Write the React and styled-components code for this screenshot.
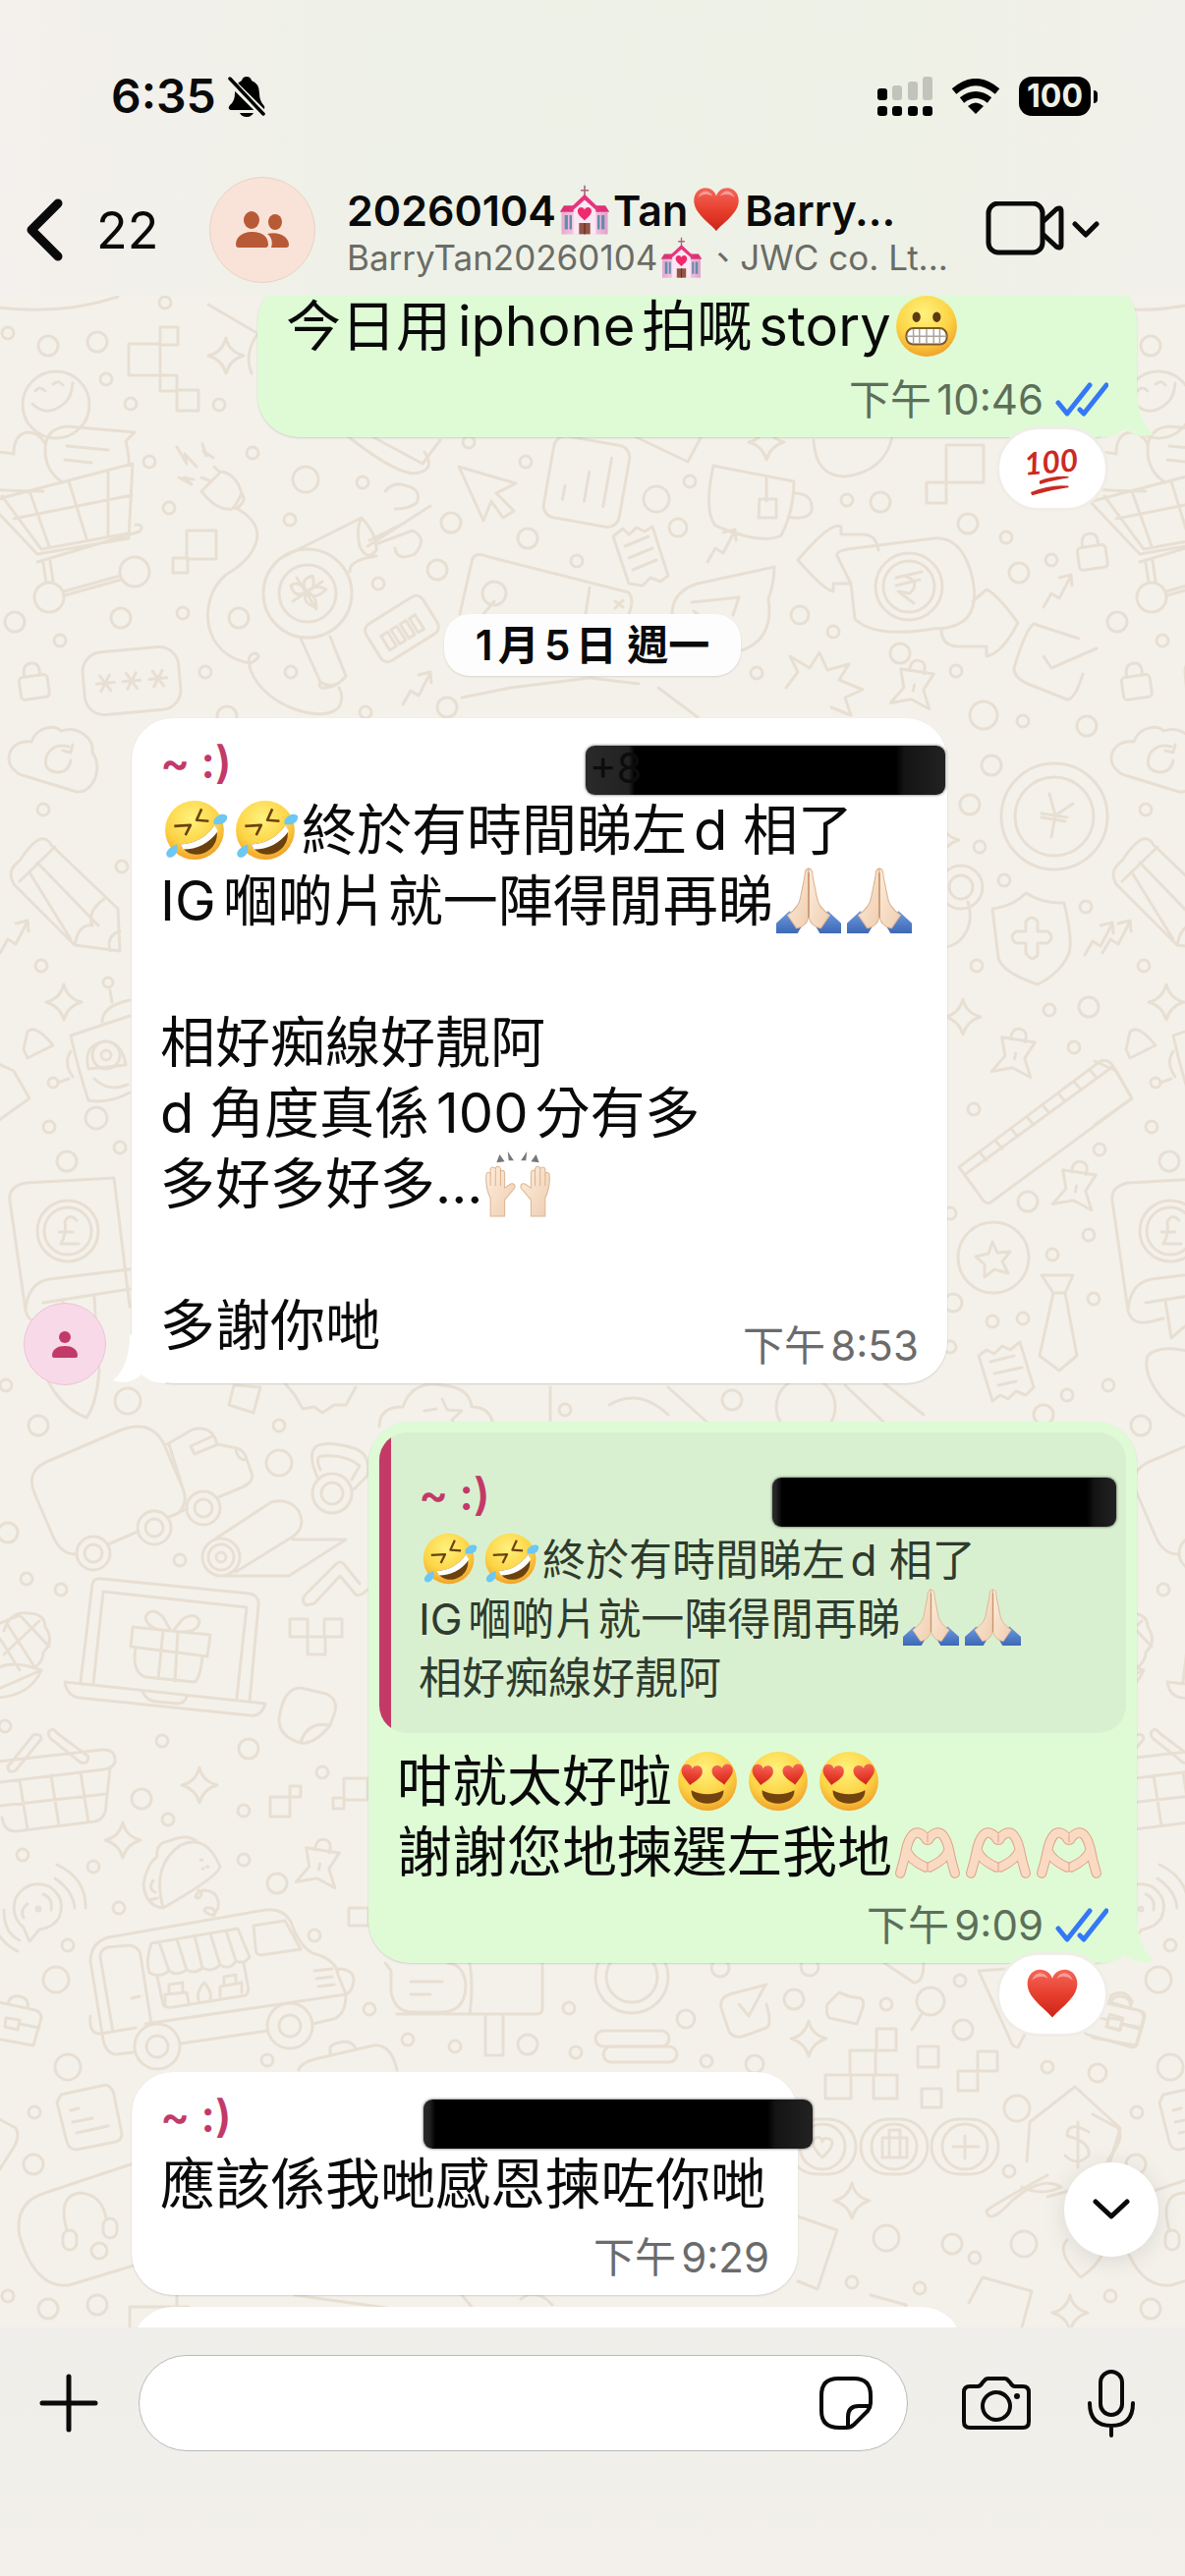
import styled, { createGlobalStyle } from "styled-components";

const GlobalStyle = createGlobalStyle`
  * {
    box-sizing: border-box;
  }
  body {
    margin: 0;
    font-family: Inter, "Noto Sans CJK TC", "Noto Sans CJK JP", sans-serif;
    color: #0a0a0a;
    text-autospace: normal;
  }
  button, input {
    font-family: inherit;
  }
`;

const Page = styled.div`
  display: flex;
  flex-direction: column;
  height: 100vh;
  background-color: #f4f1eb;
  overflow: hidden;
`;

const Header = styled.header`
  flex: none;
  padding-bottom: 13px;
  background: linear-gradient(90deg, #f4f0ed 0%, #eef1e7 35%, #eef1e6 75%, #f2f0ea 100%);
`;

const StatusBar = styled.div`
  display: flex;
  align-items: center;
  justify-content: space-between;
  padding: 70px 89px 0 113px;
  height: 126px;
`;

const Clock = styled.div`
  display: flex;
  align-items: center;
  gap: 12px;
  font-size: 48px;
  line-height: 56px;
  font-weight: 600;
`;

const StatusIcons = styled.div`
  display: flex;
  align-items: center;
  gap: 19px;
`;

const Battery = styled.div`
  display: flex;
  align-items: center;
  gap: 3px;
`;

const BatteryBody = styled.span`
  width: 73px;
  height: 40px;
  border-radius: 13px;
  background-color: black;
  color: #eef1e6;
  font-size: 32px;
  line-height: 40px;
  font-weight: 700;
  text-align: center;
`;

const BatteryTip = styled.span`
  width: 4px;
  height: 13px;
  border-radius: 0 6px 6px 0;
  background-color: black;
`;

const NavBar = styled.nav`
  display: flex;
  align-items: center;
  height: 108px;
  margin-top: 54px;
  padding: 0 87px 0 26px;
`;

const BackLink = styled.a`
  display: flex;
  align-items: center;
  gap: 34px;
  width: 187px;
  font-size: 52px;
  color: #0a0a0a;
  text-decoration: none;
`;

const Avatar = styled.span`
  display: flex;
  align-items: center;
  justify-content: center;
  flex: none;
  width: ${(props) => props.$size}px;
  height: ${(props) => props.$size}px;
  border-radius: 50%;
  background-color: ${(props) => props.$bg};
  border: 1px solid ${(props) => props.$edge};
`;

const Titles = styled.div`
  flex: 1;
  min-width: 0;
  margin: 0 22px 0 32px;
  padding-top: 4px;
  white-space: nowrap;
`;

const Title = styled.h1`
  display: flex;
  align-items: center;
  margin: 0;
  font-size: 43px;
  line-height: 52px;
  font-weight: 600;
`;

const Members = styled.p`
  display: flex;
  align-items: center;
  margin: 0;
  font-size: 35px;
  line-height: 44px;
  color: #6a6c66;
  white-space: pre;
`;

const IconButton = styled.button`
  display: flex;
  align-items: center;
  justify-content: center;
  gap: 8px;
  flex: none;
  padding: 0;
  border: none;
  background: none;
  color: #0a0a0a;
  cursor: pointer;
`;

const Chat = styled.main`
  position: relative;
  flex: 1;
  min-height: 0;
  overflow: hidden;
`;

const Wallpaper = styled.svg`
  position: absolute;
  top: 0;
  left: 0;
  width: 100%;
  height: 100%;
`;

const Messages = styled.div`
  position: relative;
  display: flex;
  flex-direction: column;
  margin-top: -16px;
`;

const Row = styled.div`
  display: flex;
  align-items: flex-end;
  justify-content: ${(props) => (props.$sent ? "flex-end" : "flex-start")};
  padding: ${(props) => (props.$sent ? "0 49px 0 0" : "0 0 0 24px")};
  margin-top: ${(props) => props.$gap || 0}px;
`;

const Bubble = styled.article`
  position: relative;
  min-width: ${(props) => props.$min || 0}px;
  margin-left: ${(props) => (props.$indent ? "110px" : "0")};
  padding: ${(props) => (props.$sent ? "11px 0 13px" : "18px 0 13px")};
  border-radius: 42px;
  background-color: ${(props) => (props.$sent ? "#defbd6" : "white")};
  box-shadow: 0 1px 2px rgba(0, 0, 0, 0.14);
`;

const TailSvg = styled.svg`
  position: absolute;
  bottom: 0;
  ${(props) => (props.$sent ? "right: -17px;" : "left: -19px; transform: scaleX(-1);")}
`;

const SideAvatar = styled.div`
  width: 110px;
  margin-bottom: -2px;
`;

const NameRow = styled.div`
  display: flex;
  align-items: flex-end;
  justify-content: space-between;
  height: 60px;
  padding-left: ${(props) => props.$inset}px;
  margin-right: ${(props) => props.$shift || 0}px;
`;

const Name = styled.strong`
  align-self: flex-start;
  font-size: 45px;
  line-height: 54px;
  font-weight: 600;
  color: #c23a68;
  white-space: pre;
`;

const Redacted = styled.span`
  display: flex;
  width: ${(props) => props.$width}px;
  height: 50px;
  padding-left: 4px;
  border-radius: 9px;
  font-size: 42px;
  line-height: 46px;
  color: #0c0c0c;
  background: linear-gradient(90deg, #2a2a2a, #222 ${(props) => props.$from}px, black ${(props) => props.$from + 6}px, black calc(100% - ${(props) => props.$to + 8}px), #141414 calc(100% - ${(props) => props.$to}px), #222);
  box-shadow: 0 0 3px rgba(0, 0, 0, 0.7);
`;

const Text = styled.p`
  margin: 0;
  padding: 0 33px 0 29px;
  font-size: 56px;
  line-height: 72px;
  white-space: pre;
`;

const Meta = styled.div`
  display: flex;
  align-items: center;
  justify-content: flex-end;
  gap: 12px;
  margin-top: ${(props) => (props.$tuck ? "-40px" : "14px")};
  padding-right: 29px;
  font-size: 42px;
  line-height: 50px;
  color: ${(props) => (props.$sent ? "#5d6f59" : "#6b6b6b")};
`;

const Quote = styled.blockquote`
  margin: 0 11px 13px;
  padding: 36px 0 26px 12px;
  border-radius: 28px;
  background: linear-gradient(90deg, #c43a66 12px, #d9f0d0 12px);
`;

const QuoteText = styled.p`
  margin: 4px 0 0;
  padding: 0 28px;
  font-size: 44px;
  line-height: 60px;
  color: #2f3b2e;
  white-space: pre;
`;

const Reaction = styled.button`
  position: absolute;
  right: 29px;
  bottom: -75px;
  display: flex;
  align-items: center;
  justify-content: center;
  width: 114px;
  height: 86px;
  padding: 0;
  border: 3px solid #f0ede7;
  border-radius: 43px;
  background-color: white;
  cursor: pointer;
`;

const DateChip = styled.time`
  align-self: center;
  margin: 180px 0 0;
  padding: 0 32px;
  border-radius: 26px;
  background-color: #fefdfd;
  box-shadow: 0 1px 2px rgba(0, 0, 0, 0.12);
  font-size: 42px;
  line-height: 63px;
  font-weight: 600;
  white-space: pre;
`;

const ScrollDown = styled(IconButton)`
  position: absolute;
  right: 27px;
  bottom: 72px;
  width: 96px;
  height: 96px;
  border-radius: 50%;
  background-color: white;
  box-shadow: 0 4px 24px rgba(0, 0, 0, 0.1);
`;

const Composer = styled.footer`
  flex: none;
  display: flex;
  align-items: flex-start;
  height: 253px;
  padding: 28px 50px 0 40px;
  background: linear-gradient(180deg, #efeeea 0%, #f3f0eb 100%);
`;

const ComposerButton = styled(IconButton)`
  height: 98px;
  margin-left: ${(props) => props.$space || 0}px;
`;

const Field = styled.div`
  flex: 1;
  min-width: 0;
  display: flex;
  align-items: center;
  height: 98px;
  margin-left: 41px;
  padding: 0 34px 0 40px;
  border: 1px solid #b9b9b9;
  border-radius: 49px;
  background-color: white;
`;

const Input = styled.input`
  flex: 1;
  min-width: 0;
  border: none;
  outline: none;
  background: none;
  font-size: 52px;
`;

const EmojiSvg = styled.svg`
  display: inline-block;
  flex: none;
  width: ${(props) => props.$size}px;
  height: ${(props) => props.$size}px;
  margin: 0 3px;
  overflow: visible;
  vertical-align: ${(props) => (props.$size > 60 ? "-13px" : "-11px")};
`;

const HiddenDefs = styled.svg`
  position: absolute;
  width: 0;
  height: 0;
`;

const Defs = () => (
  <HiddenDefs aria-hidden="true">
    <defs>
      <radialGradient id="face" cx="45%" cy="30%" r="75%">
        <stop offset="0" stopColor="#fff27c" />
        <stop offset="0.6" stopColor="#fdd345" />
        <stop offset="1" stopColor="#ee9a25" />
      </radialGradient>
      <linearGradient id="red" x1="0" y1="0" x2="0" y2="1">
        <stop offset="0" stopColor="#f4665a" />
        <stop offset="0.5" stopColor="#e8402f" />
        <stop offset="1" stopColor="#cd2318" />
      </linearGradient>
      <linearGradient id="skin" x1="0" y1="0" x2="1" y2="1">
        <stop offset="0" stopColor="#fdeedd" />
        <stop offset="1" stopColor="#efcdb0" />
      </linearGradient>
      <linearGradient id="sleeve" x1="0" y1="0" x2="0" y2="1">
        <stop offset="0" stopColor="#6d9be0" />
        <stop offset="1" stopColor="#3d68b5" />
      </linearGradient>
      <linearGradient id="wall" x1="0" y1="0" x2="1" y2="0">
        <stop offset="0" stopColor="#e7a8cf" />
        <stop offset="0.5" stopColor="#fae3f2" />
        <stop offset="1" stopColor="#e2a0ca" />
      </linearGradient>
    </defs>
  </HiddenDefs>
);

const HEART = "M32 58C24 48 4 36 4 20C4 10 11 4 18 4C25 4 30 8 32 14C34 8 39 4 46 4C53 4 60 10 60 20C60 36 40 48 32 58Z";
const HAND_LEFT = "M5 53Q9 40 11 29Q15 13 22 13Q28 14 31 20M12 32Q15 40 30 47";
const HAND_RIGHT = "M59 53Q55 40 53 29Q49 13 42 13Q36 14 33 20M52 32Q49 40 34 47";

const drawings = {
  grin: (
    <>
      <circle cx="32" cy="32" r="30" fill="url(#face)" />
      <ellipse cx="22" cy="23" rx="4" ry="5" fill="#5b3a12" />
      <ellipse cx="42" cy="23" rx="4" ry="5" fill="#5b3a12" />
      <rect x="12" y="34" width="40" height="16" rx="7" fill="#fff" stroke="#7d5a2a" strokeWidth="2" />
      <path d="M12 42H52M19 35V49M25 35V49M32 35V49M39 35V49M45 35V49" stroke="#a9a39a" strokeWidth="1.4" />
    </>
  ),
  rofl: (
    <>
      <circle cx="31" cy="32" r="29" fill="url(#face)" />
      <path d="M11 28L27 27L22 37" fill="none" stroke="#6b420f" strokeWidth="2.5" strokeLinejoin="round" />
      <path d="M38 11L33 22L45 23" fill="none" stroke="#6b420f" strokeWidth="2.5" strokeLinejoin="round" />
      <path d="M17 46C30 46 43 39 51 27C57 39 50 52 39 55C30 58 21 54 17 46Z" fill="#6b420f" />
      <path d="M17 46C30 46 43 39 51 27L54 33C46 45 33 51 20 51Z" fill="#fff" />
      <path d="M50 22C54 16 60 15 63 18C64 24 58 28 50 26Z" fill="#6cc7f4" />
      <path d="M14 46C15 53 12 59 6 59C1 57 2 50 14 46Z" fill="#6cc7f4" />
    </>
  ),
  love: (
    <>
      <circle cx="32" cy="32" r="29" fill="url(#face)" />
      <path transform="translate(6 13) rotate(8) scale(0.37)" d={HEART} fill="url(#red)" />
      <path transform="translate(34 16) rotate(-8) scale(0.37)" d={HEART} fill="url(#red)" />
      <path d="M16 41C26 46 38 46 48 41C48 50 41 54 32 54C23 54 16 50 16 41Z" fill="#71430f" />
    </>
  ),
  pray: (
    <>
      <path d="M0 54L13 42L27 54L21 64H0Z" fill="url(#sleeve)" />
      <path d="M64 54L51 42L37 54L43 64H64Z" fill="url(#sleeve)" />
      <path d="M32 0C29 0 28 3 28 8L24 28C23 36 17 42 11 46L20 59C27 58 31 53 32 47Z" fill="url(#skin)" stroke="#dcb08d" strokeWidth="1" />
      <path d="M32 0C35 0 36 3 36 8L40 28C41 36 47 42 53 46L44 59C37 58 33 53 32 47Z" fill="url(#skin)" stroke="#dcb08d" strokeWidth="1" />
      <path d="M32 4V48" stroke="#c9946c" strokeWidth="1.5" />
    </>
  ),
  raise: (
    <>
      <g fill="url(#skin)" stroke="#dcb594" strokeWidth="1">
        <path d="M5 64V46C1 38 0 30 1 22Q3 19 5 22V17Q7 14 10 17V16Q13 13 15 17V20Q18 17 19 21V36L25 32Q30 31 29 36L19 48V64Z" />
        <path d="M59 64V46C63 38 64 30 63 22Q61 19 59 22V17Q57 14 54 17V16Q51 13 49 17V20Q46 17 45 21V36L39 32Q34 31 35 36L45 48V64Z" />
        <path d="M5 22V34M10 18V34M15 18V34M59 22V34M54 18V34M49 18V34" />
      </g>
      <path d="M11 11L14 3L19 10ZM23 9L22 0L28 9ZM35 9L41 0L40 9ZM45 10L50 3L53 11Z" fill="#777" />
    </>
  ),
  hands: (
    <g fill="none" strokeLinecap="round" strokeLinejoin="round">
      <path d={HAND_LEFT} stroke="#e0a488" strokeWidth="10" />
      <path d={HAND_RIGHT} stroke="#e0a488" strokeWidth="10" />
      <path d={HAND_LEFT} stroke="#fbdac4" strokeWidth="8" />
      <path d={HAND_RIGHT} stroke="#fbdac4" strokeWidth="8" />
      <path d="M32 15V22M32 43V50" stroke="#e0a488" strokeWidth="1" />
    </g>
  ),
  heart: (
    <>
      <path d={HEART} fill="url(#red)" />
      <path d="M9 16Q12 8 19 8Q25 9 27 14Q18 9 9 16ZM37 14Q39 9 45 8Q52 8 55 16Q46 9 37 14Z" fill="#fff" opacity="0.4" />
    </>
  ),
  hundred: (
    <>
      <text x="31" y="37" textAnchor="middle" fontFamily="Lato, sans-serif" fontStyle="italic" fontWeight="700" fontSize="36" fill="#cb2a22" transform="rotate(-5 32 30)">100</text>
      <path d="M18 47Q32 41 50 42Q36 44 18 49ZM8 60Q30 51 50 53Q34 55 9 62Z" fill="#cb2a22" stroke="#cb2a22" strokeWidth="2" strokeLinejoin="round" />
    </>
  ),
  church: (
    <>
      <path d="M32 1V16M27 7H37" stroke="#a9677c" strokeWidth="2" />
      <path d="M3 34H61V62H3Z" fill="url(#wall)" />
      <path d="M18 28L32 15L46 28V62H18Z" fill="#fbe6f3" />
      <path d="M1 34L6 26H18V34ZM63 34L58 26H46V34Z" fill="#dc3275" />
      <path d="M32 12L12 31L15 34L32 19L49 34L52 31Z" fill="#e6357c" />
      <path transform="translate(22 27) scale(0.31)" d={HEART} fill="#f0286c" />
      <path d="M25 48H39V62H25Z" fill="#935345" />
      <path d="M32 48V62" stroke="#5f2e26" strokeWidth="1.5" />
      <path d="M7 38H11V56H7ZM13 38H16V56H13ZM48 38H51V56H48ZM53 38H57V56H53Z" fill="#658cab" />
    </>
  ),
};

const Emoji = ({ kind, label, size = 66 }) => (
  <EmojiSvg $size={size} viewBox="0 0 64 64" role="img" aria-label={label}>
    {drawings[kind]}
  </EmojiSvg>
);

const Tail = ({ sent }) => (
  <TailSvg $sent={sent} width="60" height="50" viewBox="0 0 60 50" aria-hidden="true">
    <path d="M43 0C43 22 49 38 60 47C49 51 38 48 31 41C24 48 14 50 6 50L16 16Z" fill={sent ? "#defbd6" : "white"} />
  </TailSvg>
);

const Ticks = () => (
  <svg width="54" height="36" viewBox="0 0 54 36" role="img" aria-label="已讀">
    <path d="M3 21L12 32L35 3M25 28L29 32L52 3" fill="none" stroke="#3478f6" strokeWidth="5" strokeLinecap="round" strokeLinejoin="round" />
  </svg>
);

// x, y, radius
const dots = [
  [8, 339, 6], [49, 352, 10], [99, 348, 10], [168, 308, 6], [108, 386, 6], [133, 411, 6], [223, 412, 6],
  [152, 470, 6], [257, 461, 6], [311, 488, 13], [172, 517, 6], [369, 491, 6], [295, 529, 6], [459, 532, 10],
  [15, 633, 10], [61, 652, 6], [123, 629, 10], [186, 624, 6], [243, 629, 10], [385, 594, 6], [445, 580, 10],
  [209, 684, 6], [296, 684, 6], [455, 720, 10], [372, 725, 6], [231, 729, 10], [44, 824, 6], [124, 882, 6],
  [42, 983, 6], [110, 1000, 5], [50, 1147, 6], [122, 1168, 6], [68, 1182, 10], [477, 450, 6], [535, 470, 6],
  [668, 508, 13], [537, 548, 10], [690, 537, 9], [702, 490, 6], [862, 509, 6], [896, 511, 10], [587, 571, 6],
  [985, 533, 10], [1024, 547, 6], [1070, 570, 6], [1037, 583, 10], [814, 626, 9], [848, 643, 6], [916, 665, 10],
  [973, 683, 6], [770, 685, 6], [1009, 779, 10], [1041, 734, 6], [1106, 739, 10], [1001, 728, 14], [987, 819, 10],
  [997, 862, 6], [1022, 896, 6], [1105, 923, 6], [994, 983, 6], [1068, 1028, 6], [1108, 1025, 10], [1093, 1066, 6],
  [991, 1129, 6], [1119, 1170, 6], [1046, 1223, 10], [967, 1235, 6], [1108, 1257, 6], [1071, 1277, 6],
  [970, 1326, 9], [1010, 1345, 6], [1041, 1342, 6], [1113, 1322, 6], [1086, 1420, 6], [967, 1371, 6],
  [6, 1410, 6], [39, 1451, 10], [130, 1426, 13], [284, 1451, 6], [284, 1489, 13], [8, 1560, 10], [27, 1607, 6],
  [62, 1618, 6], [183, 1588, 6], [5, 1757, 6], [165, 1772, 6], [253, 1780, 10], [328, 1804, 6], [144, 1831, 10],
  [248, 1843, 6], [171, 1852, 6], [23, 1888, 6], [95, 1900, 6], [248, 1893, 6], [282, 1917, 10], [121, 1942, 6],
  [69, 1980, 6], [57, 2015, 13], [320, 1970, 6], [69, 2104, 13], [272, 2097, 6], [376, 2045, 6], [415, 2076, 6],
  [463, 2083, 6], [537, 2081, 10], [579, 2044, 6], [586, 2089, 6], [35, 2150, 6], [34, 2203, 10], [8, 2337, 6],
  [49, 2350, 10], [99, 2346, 10], [733, 2003, 9], [824, 2002, 9], [698, 2055, 9], [808, 2035, 10], [902, 2040, 6],
  [980, 2066, 10], [977, 2016, 6], [719, 2098, 6], [768, 2101, 9], [1066, 2104, 6], [1117, 2110, 9],
  [1035, 2146, 13], [1027, 2210, 6], [902, 2278, 13], [969, 2284, 10], [992, 2298, 6], [1042, 2284, 13],
  [867, 2323, 6], [936, 2329, 6], [575, 1435, 6], [745, 1425, 10], [1062, 1440, 10], [820, 1432, 30],
];

// x, y, width, height
const squares = [
  [131, 350, 32, 32], [163, 333, 18, 18], [163, 382, 17, 16], [180, 397, 22, 21], [190, 540, 30, 29],
  [176, 568, 15, 15], [963, 453, 38, 38], [943, 491, 20, 21], [295, 1648, 18, 18], [313, 1666, 18, 18],
  [330, 1648, 18, 18], [275, 1829, 20, 20], [295, 1818, 11, 11], [350, 1810, 24, 22], [339, 1830, 11, 11],
  [355, 1942, 20, 18], [892, 2065, 20, 22], [865, 2087, 26, 25], [840, 2112, 26, 24], [889, 2112, 24, 24],
  [934, 2083, 21, 21], [975, 2108, 20, 20], [995, 2088, 20, 20], [938, 2126, 20, 19], [132, 2348, 60, 30],
];

const sparkles = [
  [230, 362], [65, 1020], [780, 450], [980, 1035], [958, 855], [203, 1817], [125, 1873], [823, 2075],
  [867, 2240], [1089, 2354],
];

const pins = [[930, 700], [1095, 1210], [1033, 1075], [325, 1900]];
const locks = [[1111, 565], [34, 697]];
const arrows = [[410, 717], [720, 572], [1062, 618], [0, 970], [1104, 972]];

const Doodles = () => (
  <g id="doodles">
    {dots.map(([x, y, r]) => (
      <circle key={`${x}-${y}`} cx={x} cy={y} r={r} />
    ))}
    {squares.map(([x, y, w, h]) => (
      <rect key={`${x}-${y}`} x={x} y={y} width={w} height={h} />
    ))}
    {sparkles.map(([x, y]) => (
      <path key={`${x}-${y}`} transform={`translate(${x} ${y})`} d="M0-18Q3-4 18 0Q4 4 0 18Q-4 4-18 0Q-4-3 0-18Z" />
    ))}
    {pins.map(([x, y]) => (
      <path key={`${x}-${y}`} transform={`translate(${x} ${y}) rotate(12)`} d="M-8-16Q-9-28 0-28Q8-28 7-16M-17-16L17-18L10 0L20 18L0 12L-20 20L-10 2ZM0-3V3" />
    ))}
    {locks.map(([x, y]) => (
      <g key={`${x}-${y}`} transform={`translate(${x} ${y}) rotate(-8)`}>
        <rect x="-14" y="-9" width="29" height="23" rx="4" />
        <path d="M-8-9V-14Q-7-22 0-22Q8-22 8-14V-9" />
      </g>
    ))}
    {arrows.map(([x, y]) => (
      <path key={`${x}-${y}`} transform={`translate(${x} ${y})`} d="M0 0L8-14L16-9L28-32M16-30L28-33L29-22" />
    ))}

    {/* cart and smiley */}
    <circle cx="57" cy="412" r="34" />
    <path d="M36 398Q40 392 46 398M54 391Q60 386 64 392M33 411Q48 426 66 410Q73 404 74 390" />
    <path d="M-10 460Q5 460 14 462Q14 442 28 440Q40 440 46 452M137 440L128 449Q132 466 131 472M137 440L68 434Q46 436 46 458Q46 480 64 491M68 454L110 458M66 468L93 471M-10 498Q18 500 44 500" />
    <path d="M-15 508L38 564L131 548L135 472L-10 510M2 505L42 559L130 543M30 500L50 556M70 490L88 548M110 480V546M14 528L134 504M38 572L142 541Q148 534 138 534M44 573L47 593M51 571L54 591M65 602L122 586M66 606L123 590" />
    <circle cx="50" cy="608" r="15" />
    <circle cx="137" cy="582" r="15" />

    {/* plug and its cord */}
    <path d="M180 455L190 472L188 462L200 475M206 452L210 464L207 459L217 466M182 486L195 493L187 486L197 488M205 500L225 480Q240 482 246 502Q240 515 236 518Q220 520 205 500ZM205 486L215 490M218 475L224 481M246 502Q252 510 240 518M242 518C280 540 256 570 230 585C200 610 205 668 255 675Q268 668 260 665Q250 665 255 682C270 722 335 738 346 718Q350 708 345 700" />

    {/* hair dryer */}
    <circle cx="313" cy="604" r="45" />
    <circle cx="313" cy="604" r="29" />
    <path d="M296 596Q304 590 312 602Q300 610 296 596M318 586Q304 590 312 602Q322 600 318 586M332 600Q322 594 312 602Q320 612 332 600M322 618Q322 606 312 602Q306 614 322 618M298 612L328 592M302 588L322 620" />
    <path d="M286 568L368 527M368 527Q384 544 383 560Q374 572 366 556Q362 538 368 527M383 566Q355 570 356 582M306 650L326 694Q340 704 352 688L336 648M326 694Q322 704 340 698M374 556L438 515M376 550L412 532M392 500Q400 490 412 494Q430 498 424 512Q416 518 402 518M402 558Q404 572 422 564Q436 548 420 540L385 553" />

    {/* barcode, password, cloud */}
    <g transform="translate(409 640) rotate(-32)">
      <rect x="-34" y="-22" width="68" height="44" rx="8" />
      <path d="M-22-5H-14V12H-22ZM-10-5H-3V12H-10ZM1-5H8V12H1ZM12-5H19V12H12Z" />
    </g>
    <g transform="translate(134 693) rotate(-5)">
      <rect x="-49" y="-32" width="98" height="64" rx="20" />
      {[-27, 0, 27].map((x) => (
        <path key={x} d={`M${x - 9} 0H${x + 9}M${x - 5}-8L${x + 5} 8M${x + 5}-8L${x - 5} 8`} />
      ))}
    </g>
    <path d="M16 785C2 775 10 752 32 755C38 738 58 738 62 744C80 738 96 752 94 766C106 782 94 808 78 806L26 790Q18 788 16 785ZM70 760Q55 756 48 768Q42 784 58 786Q70 786 72 774M74 758L72 766L64 764" />

    {/* pencil and robot */}
    <path d="M12 895Q8 885 20 876Q42 842 52 860L120 925L122 968L76 962L14 900ZM20 897L56 862M38 878L100 942M30 888L72 956M106 915Q88 928 94 942Q80 940 76 962M112 968Q108 952 122 948" />
    <path d="M24 1068L28 1050Q36 1042 54 1064L28 1077ZM72 1054L132 1034M72 1054Q80 1090 90 1120Q110 1124 132 1112M72 1070Q64 1082 74 1096M59 1102L70 1098M104 1040Q104 1024 132 1018M114 1020L112 1008M90 1088Q84 1064 106 1060Q124 1060 128 1084ZM96 1098Q110 1112 130 1104M-8 1080L14 1090L30 1118L-8 1145" />
    <circle cx="108" cy="1074" r="14" />
    <circle cx="108" cy="1074" r="5" />
    <circle cx="54" cy="1102" r="5" />
    <circle cx="98" cy="1138" r="11" />

    {/* coin book */}
    <path d="M26 1334L10 1222Q8 1208 26 1204L116 1199L132 1330M26 1334Q28 1306 50 1302L132 1292M26 1334Q30 1350 50 1345L62 1342M44 1326L132 1312M64 1324L70 1362L84 1350L98 1358L96 1320" />
    <circle cx="69" cy="1253" r="31" />
    <circle cx="69" cy="1253" r="24" />
    <path d="M78 1242Q70 1234 66 1244Q68 1256 62 1266H80M60 1254H74" />
    <path d="M46 1380C40 1400 60 1432 88 1443Q98 1430 101 1395Q100 1376 80 1374Q56 1370 46 1380Z" />

    {/* upper middle */}
    <path d="M467 475L525 492L505 502L523 520L512 527L500 510L492 530ZM637 440L700 470L716 440M355 445Q400 480 420 482Q445 480 432 460M380 445L430 472L448 448" />
    <g transform="translate(596 490) rotate(10)">
      <rect x="-38" y="-42" width="78" height="84" rx="12" />
      <path d="M-20 8V22M2-10V20M22-28V22" />
    </g>
    <path d="M726 474L808 490Q808 520 795 545Q775 555 728 535Q716 520 726 474ZM780 486V510M773 508H790V527H772ZM808 502Q828 502 826 520Q822 530 802 526M828 448Q830 485 860 485Q900 480 908 445" />
    <path d="M624 546L634 538L640 544L648 537L656 541L664 536L680 586L672 592L662 588L654 596L640 594ZM636 556L660 546M640 568L664 558M644 580L668 570" />
    <path d="M468 625L480 572Q482 560 498 567L640 603Q646 612 640 625M600 598L596 625M626 612L634 618M634 611L626 619M492 625L503 612" />
    <circle cx="503" cy="604" r="12" />
    <path d="M684 625Q684 602 710 594L788 577Q788 592 782 610Q788 650 755 662M704 613L752 608L746 626M706 622L714 628" />
    <path d="M894 560Q892 544 878 544H856V536Q846 530 812 570Q838 600 848 602V594H866L852 566Q850 560 870 558L950 548Q980 545 990 590Q1000 640 950 640Q890 650 870 630L866 594M990 612L1004 600Q1014 604 1036 634Q1020 665 1004 668V658H976Q958 658 958 640" />
    <circle cx="925" cy="597" r="34" />
    <circle cx="925" cy="597" r="26" />
    <path d="M912 588L938 582M912 596L936 590M920 586Q938 592 926 604L914 602L930 614" />
    <path d="M1098 650L1052 635Q1044 640 1032 680Q1032 690 1046 696L1086 712Q1094 712 1102 686M1062 668L1070 680L1116 660" />
    <path d="M800 700L812 684L804 668L824 680L834 664L842 682L864 676L854 692L878 702L860 710L866 728L846 720M470 710L520 700L600 690L650 696M670 700L710 730" />
    <path d="M262 340Q248 360 256 380M212 310L260 338M-10 312Q60 322 120 302" />

    {/* right column */}
    <circle cx="1073" cy="831" r="54" />
    <circle cx="1073" cy="831" r="40" />
    <path d="M1068 808L1074 830L1092 818M1060 832L1084 836M1060 828L1086 832M1074 830L1070 852" />
    <circle cx="978" cy="903" r="22" />
    <circle cx="978" cy="903" r="12" />
    <path d="M985 918Q992 940 978 956Q970 964 960 964" />
    <path d="M1010 925Q1032 922 1044 909Q1062 920 1083 919Q1092 958 1088 970Q1080 990 1056 1002Q1020 990 1016 975ZM1044 938Q1050 930 1056 938V948H1066Q1074 954 1066 960H1056V972Q1050 980 1044 970V960H1034Q1026 954 1034 948H1044Z" />
    <path d="M976 1188L1120 1080Q1128 1078 1132 1084L1152 1118L1008 1224Q1002 1226 998 1218ZM984 1194L1132 1086M998 1174L1004 1181M1014 1162L1020 1169M1030 1150L1036 1157M1046 1138L1052 1145M1062 1126L1068 1133M1078 1114L1084 1121M1094 1102L1100 1109M1110 1090L1116 1097" />
    <circle cx="1011" cy="1280" r="36" />
    <path d="M1010 1264L1015 1275L1028 1274L1020 1284L1026 1296L1012 1292L1002 1300L1002 1287L993 1279L1006 1276Z" />
    <path d="M1060 1298H1092L1084 1316H1072ZM1072 1316L1058 1380L1078 1395L1096 1380L1084 1316" />
    <path d="M996 1380L1004 1374L1012 1378L1020 1370L1028 1374L1038 1366L1052 1412L1044 1420L1034 1416L1026 1424L1018 1420L1010 1426ZM1008 1386L1032 1380M1012 1398L1040 1392M1016 1410L1034 1406" />

    {/* van, roll, kettlebell */}
    <path d="M77 1582Q62 1582 54 1564L36 1522Q24 1496 52 1486L122 1456Q152 1444 166 1468L186 1515Q192 1528 182 1540L172 1544M170 1470L196 1455Q216 1450 221 1470M172 1470L186 1515M221 1470L236 1473Q248 1474 251 1485L257 1502Q256 1510 246 1514L222 1524M194 1472L216 1462M194 1472L198 1480L222 1470M240 1476Q242 1486 250 1486M110 1572L140 1559M172 1544L190 1536" />
    {[[95, 1581], [157, 1555], [207, 1535]].map(([x, y]) => (
      <g key={x}>
        <circle cx={x} cy={y} r="17" />
        <circle cx={x} cy={y} r="9" />
      </g>
    ))}
    <circle cx="225" cy="1585" r="19" />
    <circle cx="225" cy="1585" r="13" />
    <circle cx="225" cy="1585" r="5" />
    <path d="M218 1567L276 1529Q294 1524 304 1538Q312 1554 298 1564L240 1600M298 1567H352L294 1604H230" />
    <circle cx="338" cy="1520" r="20" />
    <circle cx="338" cy="1520" r="11" />
    <path d="M324 1506Q312 1480 322 1472Q334 1466 360 1474Q378 1480 374 1502L360 1516M326 1496Q320 1482 328 1482Q352 1480 366 1492L358 1506" />
    <path d="M386 1452Q386 1432 410 1432Q420 1404 450 1410Q478 1412 480 1432Q500 1432 502 1452M450 1424L455 1435L470 1436L460 1445L464 1452M432 1436L444 1434M290 1408L300 1420L308 1434L320 1432L328 1438L340 1430L352 1430L362 1412M238 1410L233 1430L258 1438L265 1412Z" />
    <path d="M560 1412V1448M680 1412L720 1448M900 1408L940 1440M860 1410L900 1448M620 1430Q650 1412 680 1440" />

    {/* laptop with gift */}
    <path d="M82 1712L94 1612Q96 1606 104 1607L254 1622Q264 1624 263 1634L254 1732M95 1714L105 1620L251 1636L241 1728M66 1712L270 1734Q266 1748 254 1746L80 1728Q68 1726 66 1712ZM145 1722Q150 1732 160 1732L180 1734Q188 1734 190 1727" />
    <path d="M135 1656L214 1664L211 1686L133 1676ZM166 1660L161 1709M181 1661L178 1711M138 1678Q134 1702 148 1707L198 1712Q204 1708 206 1686M174 1660Q150 1660 148 1646Q154 1634 166 1646ZM176 1660Q202 1664 203 1650Q198 1640 186 1648Z" />
    <path d="M310 1624Q306 1630 312 1634L320 1632L346 1604L362 1623Q366 1626 374 1618M310 1624L342 1592Q346 1588 350 1592L366 1612" />
    <path d="M284 1750Q288 1718 306 1718L332 1724Q344 1730 341 1742L336 1756Q320 1776 306 1774Q284 1768 284 1750ZM306 1774Q312 1752 336 1756" />
    <path d="M0 1652L20 1644M4 1660Q10 1640 28 1642Q46 1642 46 1656Q56 1670 44 1682Q44 1692 34 1698M8 1654L36 1698M4 1684L40 1650M0 1668L20 1700M22 1646L50 1676M-6 1700Q10 1688 42 1700Q30 1728 -8 1728M42 1700L-8 1722" />

    {/* basket, waves, taco */}
    <path d="M-10 1794L104 1781Q118 1780 117 1794Q114 1800 106 1801L-8 1815M2 1850Q4 1864 16 1864L96 1854Q108 1852 108 1836L112 1800M20 1812L28 1862M52 1807L60 1858M82 1804L90 1855M0 1838L108 1826M8 1798L34 1766Q42 1764 42 1770L16 1802Q8 1806 8 1798M50 1762Q54 1758 58 1764L90 1788Q90 1796 82 1794L52 1770Q48 1766 50 1762" />
    <path d="M30 1976L24 1962Q10 1950 16 1932Q28 1912 50 1920Q68 1932 60 1952Q54 1962 40 1964ZM24 1952Q20 1944 28 1938M44 1928Q54 1932 52 1944M56 1912Q74 1924 76 1942M58 1898Q88 1912 87 1942M4 1944Q4 1968 20 1975M-6 1962Q4 1980 18 1986" />
    <circle cx="39" cy="1943" r="2" />
    <path d="M166 1942Q154 1898 184 1878Q210 1866 224 1900Q222 1910 166 1942ZM166 1942Q148 1940 146 1918Q150 1896 160 1890Q158 1876 172 1874Q190 1866 200 1874M156 1914Q150 1922 158 1926M160 1932L152 1934M204 1893H206M210 1900H212M206 1902H207" />
    <path d="M218 1950Q204 1946 210 1942Q220 1940 218 1950M202 1926Q196 1932 202 1932Q208 1926 202 1924M206 1924Q224 1924 222 1942Q220 1946 216 1950" />

    {/* food truck */}
    <path d="M104 2070L92 1996Q92 1978 110 1972L270 1944Q288 1942 296 1956Q304 1980 318 1988Q342 1994 344 2010L352 2030L148 2060M104 2070Q106 2090 118 2091L136 2089M184 2080L272 2067M318 2060L340 2055Q352 2050 352 2030M344 2004Q360 2004 360 2016Q358 2030 350 2030M92 2052Q90 2070 102 2070L138 2064M115 2068L102 1992Q102 1984 110 1982L132 1980Q142 1982 143 1990L154 2060M134 2034L142 2032M258 1960L290 1955L306 1984L266 1990Q260 1990 260 1982ZM320 2006L338 2004M322 2014L338 2012M324 2022L340 2020" />
    <path d="M154 1978L242 1963L254 1992Q248 2000 240 1996Q234 2006 224 2000Q216 2008 206 2003Q198 2010 190 2005Q180 2012 172 2006Q162 2014 152 2008Q148 1996 154 1978ZM162 1977L172 2006M180 1974L190 2005M198 1970L206 2003M214 1968L224 2000M230 1965L240 1996M160 2012L166 2040Q168 2044 176 2043L250 2031Q254 2028 252 2020L248 1998M168 2040V2030L190 2028L192 2038M172 2028V2020L186 2018V2028M202 2036Q200 2026 208 2018Q216 2028 214 2034M224 2032V2022L246 2018V2028M228 2020V2012L240 2010V2018" />
    <circle cx="160" cy="2083" r="23" />
    <circle cx="160" cy="2083" r="11" />
    <circle cx="295" cy="2062" r="23" />
    <circle cx="295" cy="2062" r="11" />
    <path d="M-10 2036L36 2046Q42 2048 42 2054L34 2082L-10 2074M8 2040Q10 2030 20 2032Q30 2034 28 2044M6 2054L20 2056L18 2066L5 2063ZM20 2060L40 2064" />
    <path d="M62 2132L108 2122Q114 2124 116 2132L124 2172Q124 2178 118 2180L78 2188Q70 2188 68 2180L58 2140ZM72 2148L80 2146M74 2160L94 2156M78 2171L110 2164M-10 2152L16 2166Q22 2176 10 2192L-8 2220" />
    <path d="M136 2202L46 2232Q14 2242 20 2276Q36 2330 70 2326L136 2306M68 2270Q58 2234 82 2232Q104 2234 108 2258" />
    <rect x="64" y="2270" width="14" height="20" rx="7" />
    <rect x="105" y="2258" width="14" height="20" rx="7" />
    <circle cx="101" cy="2291" r="8" />

    {/* mailbox row */}
    <path d="M392 1998L398 2006V2028Q402 2048 420 2048H452Q474 2046 474 2020Q472 2000 456 1998M478 1998Q482 2020 478 2050M404 2050H546Q552 2050 552 2044V1998M418 2017H450M418 2030H438M494 2050V2092H512V2050" />
    <circle cx="643" cy="2012" r="37" />
    <circle cx="643" cy="2012" r="26" />
    <rect x="606" y="2067" width="75" height="16" rx="8" />
    <rect x="614" y="2083" width="75" height="16" rx="8" />
    <path d="M304 2107Q306 2100 320 2096L380 2082Q398 2080 404 2107M336 2092V2084Q338 2080 350 2078Q360 2078 362 2086" />
    <path d="M780 2020L742 2030Q732 2034 734 2044L742 2068Q748 2076 758 2072L780 2064Q786 2060 780 2040M752 2040L762 2052L778 2022M848 2034L854 2028L864 2032L876 2034Q880 2036 878 2044L872 2060L844 2054Q840 2050 842 2040Z" />
    <circle cx="947" cy="2037" r="14" />
    <path d="M938 2050L928 2066M996 2006L1080 2000L1036 2084Q1030 2084 1028 2076ZM900 1998L930 2018Q940 2018 940 1998" />
    <g transform="translate(1134 2060) rotate(16)">
      <rect x="-28" y="-20" width="56" height="38" rx="5" />
      <path d="M-11-20V-27Q0-38 11-27V-20M-28-2H-7M7-2H28M-7-8H7V5H-7Z" />
    </g>
    {[837, 910, 982].map((x) => (
      <g key={x}>
        <rect x={x - 34} y="2157" width="68" height="56" rx="28" />
        <circle cx={x} cy="2185" r="23" />
      </g>
    ))}
    <path d="M837 2196Q822 2182 830 2176Q836 2174 837 2180Q838 2174 846 2178Q850 2184 837 2196M898 2176H923V2196H898ZM905 2176V2168H916V2176M905 2176V2196M916 2176V2196M970 2185H996M982 2174V2197" />
    <path d="M1045 2200L1048 2160L1094 2124L1140 2166L1124 2220L1066 2236M1108 2170Q1086 2158 1086 2174Q1110 2180 1108 2194Q1096 2206 1084 2194M1097 2160V2206M1066 2214Q1018 2240 1004 2250Q1006 2266 1030 2240Q1060 2214 1080 2226Q1060 2236 1040 2226" />
    <path d="M812 2256L852 2270L832 2330L812 2322M1086 2280Q1074 2292 1100 2318Q1126 2300 1124 2280M986 2344L1000 2318L1050 2332L1040 2369M886 2336L922 2346L916 2369M180 2336V2348M300 2336L400 2350M470 2336L480 2348M530 2340Q546 2328 562 2346" />
  </g>
);

const GroupIcon = () => (
  <svg width="56" height="38" viewBox="0 0 56 38" fill="#b85a36" aria-hidden="true">
    <ellipse cx="17" cy="9" rx="8" ry="9" />
    <ellipse cx="41" cy="11" rx="7" ry="8" />
    <path d="M1 34C1 26 8 21 18 21C28 21 34 26 34 34Q34 37 31 37H4Q1 37 1 34ZM33 23C45 20 55 26 55 34Q55 37 52 37H37C39 31 37 26 33 23Z" />
  </svg>
);

function App() {
  return (
    <Page>
      <GlobalStyle />
      <Defs />
      <Header>
        <StatusBar>
          <Clock>
            6:35
            <svg width="38" height="42" viewBox="0 0 38 42" aria-hidden="true">
              <path d="M12 38H26Q24 42 19 42Q14 42 12 38ZM19 1Q23 1 24 5Q32 8 32 18Q32 26 37 31Q38 35 35 35H3Q-1 34 2 30Q7 26 7 18Q7 8 14 5Q15 1 19 1Z" />
              <path d="M2 5L36 39" stroke="#f1f0e9" strokeWidth="8" />
              <path d="M2 3L36 39" stroke="black" strokeWidth="3.5" strokeLinecap="round" />
            </svg>
          </Clock>
          <StatusIcons>
            <svg width="56" height="40" viewBox="0 0 56 40" aria-hidden="true">
              <rect y="12" width="10" height="12" rx="3" />
              <rect x="15" y="9" width="10" height="15" rx="3" fill="#c2c4bb" />
              <rect x="31" y="5" width="10" height="19" rx="3" fill="#c2c4bb" />
              <rect x="46" width="10" height="24" rx="3" fill="#c2c4bb" />
              <rect y="30" width="10" height="10" rx="3" />
              <rect x="15" y="30" width="10" height="10" rx="3" />
              <rect x="31" y="30" width="10" height="10" rx="3" />
              <rect x="46" y="30" width="10" height="10" rx="3" />
            </svg>
            <svg width="50" height="36" viewBox="0 0 50 36" fill="none" stroke="black" strokeWidth="7" aria-hidden="true">
              <path d="M3 13Q25-6 47 13" />
              <path d="M11 22Q25 11 39 22" />
              <path d="M17 28Q25 21 33 28L25 36Z" fill="black" stroke="none" />
            </svg>
            <Battery>
              <BatteryBody>100</BatteryBody>
              <BatteryTip />
            </Battery>
          </StatusIcons>
        </StatusBar>
        <NavBar>
          <BackLink href="#chats" aria-label="返回 22">
            <svg width="38" height="64" viewBox="0 0 38 64" aria-hidden="true">
              <path d="M33 5L6 32L33 59" fill="none" stroke="currentColor" strokeWidth="9" strokeLinecap="round" strokeLinejoin="round" />
            </svg>
            22
          </BackLink>
          <Avatar $size={108} $bg="#f9e3d9" $edge="#ecd0c4">
            <GroupIcon />
          </Avatar>
          <Titles>
            <Title>
              20260104
              <Emoji kind="church" label="💒" size={52} />
              Tan
              <Emoji kind="heart" label="❤️" size={52} />
              Barry...
            </Title>
            <Members>
              BarryTan20260104
              <Emoji kind="church" label="💒" size={43} />
              {"、JWC co. Lt..."}
            </Members>
          </Titles>
          <IconButton type="button" aria-label="視像通話">
            <svg width="80" height="58" viewBox="0 0 80 58" fill="none" stroke="currentColor" strokeWidth="5" strokeLinejoin="round" aria-hidden="true">
              <rect x="3" y="2" width="55" height="50" rx="10" />
              <path d="M58 21L72 8Q77 5 77 10V44Q77 49 72 46L58 33" />
            </svg>
            <svg width="28" height="18" viewBox="0 0 28 18" aria-hidden="true">
              <path d="M3 3L14 14L25 3" fill="none" stroke="currentColor" strokeWidth="5" strokeLinecap="round" strokeLinejoin="round" />
            </svg>
          </IconButton>
        </NavBar>
      </Header>

      <Chat>
        <Wallpaper viewBox="0 301 1206 2068" preserveAspectRatio="xMinYMin slice" fill="none" stroke="#e8dfd3" strokeWidth="3" strokeLinecap="round" strokeLinejoin="round" aria-hidden="true">
          <Doodles />
          <use href="#doodles" x="1122" />
        </Wallpaper>
        <Messages>
          <Row $sent>
            <Bubble $sent $min={895}>
              <Text>
                今日用iphone拍嘅story
                <Emoji kind="grin" label="😬" />
              </Text>
              <Meta $sent>
                下午10:46
                <Ticks />
              </Meta>
              <Tail sent />
              <Reaction type="button">
                <Emoji kind="hundred" label="💯" size={56} />
              </Reaction>
            </Bubble>
          </Row>

          <DateChip>1月5日 週一</DateChip>

          <Row $gap={43}>
            <SideAvatar>
              <Avatar $size={84} $bg="#f8d9e8" $edge="#edc3d8">
                <svg width="28" height="28" viewBox="0 0 28 28" fill="#c23a68" aria-hidden="true">
                  <circle cx="14" cy="7" r="6" />
                  <path d="M1 26C1 19 7 16 14 16C21 16 27 19 27 26Q27 28 25 28H3Q1 28 1 26Z" />
                </svg>
              </Avatar>
            </SideAvatar>
            <Bubble>
              <NameRow $inset={29} $shift={2}>
                <Name>{"~ :)"}</Name>
                <Redacted $width={366} $from={44} $to={42}>+8</Redacted>
              </NameRow>
              <Text>
                <Emoji kind="rofl" label="🤣" />
                <Emoji kind="rofl" label="🤣" />
                終於有時間睇左d 相了
                {"\n"}IG嗰啲片就一陣得閒再睇
                <Emoji kind="pray" label="🙏🏻" />
                <Emoji kind="pray" label="🙏🏻" />
                {"\n\n相好痴線好靚阿\nd 角度真係100分有多\n多好多好多..."}
                <Emoji kind="raise" label="🙌🏻" />
                {"\n\n多謝你哋"}
              </Text>
              <Meta $tuck>下午8:53</Meta>
              <Tail />
            </Bubble>
          </Row>

          <Row $sent $gap={39}>
            <Bubble $sent>
              <Quote>
                <NameRow $inset={28} $shift={10}>
                  <Name>{"~ :)"}</Name>
                  <Redacted $width={350} $from={4} $to={22} />
                </NameRow>
                <QuoteText>
                  <Emoji kind="rofl" label="🤣" size={57} />
                  <Emoji kind="rofl" label="🤣" size={57} />
                  終於有時間睇左d 相了
                  {"\n"}IG嗰啲片就一陣得閒再睇
                  <Emoji kind="pray" label="🙏🏻" size={57} />
                  <Emoji kind="pray" label="🙏🏻" size={57} />
                  {"\n相好痴線好靚阿"}
                </QuoteText>
              </Quote>
              <Text>
                咁就太好啦
                <Emoji kind="love" label="😍" />
                <Emoji kind="love" label="😍" />
                <Emoji kind="love" label="😍" />
                {"\n謝謝您地揀選左我地"}
                <Emoji kind="hands" label="🫶🏻" />
                <Emoji kind="hands" label="🫶🏻" />
                <Emoji kind="hands" label="🫶🏻" />
              </Text>
              <Meta $sent>
                下午9:09
                <Ticks />
              </Meta>
              <Tail sent />
              <Reaction type="button">
                <Emoji kind="heart" label="❤️" size={58} />
              </Reaction>
            </Bubble>
          </Row>

          <Row $gap={111}>
            <Bubble $indent>
              <NameRow $inset={29} $shift={-15}>
                <Name>{"~ :)"}</Name>
                <Redacted $width={396} $from={6} $to={38} />
              </NameRow>
              <Text>應該係我哋感恩揀咗你哋</Text>
              <Meta>下午9:29</Meta>
            </Bubble>
          </Row>

          <Row $gap={12}>
            <Bubble $indent $min={846}>
              <NameRow $inset={29} />
            </Bubble>
          </Row>
        </Messages>
        <ScrollDown type="button" aria-label="捲動至底部">
          <svg width="38" height="22" viewBox="0 0 38 22" aria-hidden="true">
            <path d="M3 3L19 18L35 3" fill="none" stroke="currentColor" strokeWidth="5" strokeLinecap="round" strokeLinejoin="round" />
          </svg>
        </ScrollDown>
      </Chat>

      <Composer>
        <ComposerButton type="button" aria-label="新增附件">
          <svg width="60" height="60" viewBox="0 0 60 60" aria-hidden="true">
            <path d="M3 30H57M30 3V57" stroke="currentColor" strokeWidth="5" strokeLinecap="round" />
          </svg>
        </ComposerButton>
        <Field>
          <Input type="text" aria-label="訊息" />
          <IconButton type="button" aria-label="貼圖">
            <svg width="56" height="56" viewBox="0 0 56 56" fill="none" stroke="currentColor" strokeWidth="4" strokeLinejoin="round" aria-hidden="true">
              <path d="M28 53H21Q3 53 3 36V20Q3 3 20 3H36Q53 3 53 20V28Q53 32 50 36L36 50Q33 53 28 53ZM30 53V42Q30 31 41 31H53" />
            </svg>
          </IconButton>
        </Field>
        <ComposerButton type="button" $space={54} aria-label="相機">
          <svg width="72" height="56" viewBox="0 0 72 56" fill="none" stroke="currentColor" strokeWidth="4" strokeLinejoin="round" aria-hidden="true">
            <path d="M9 11H17Q20 11 22 7L24 5Q25 3 28 3H44Q47 3 48 5L50 7Q52 11 55 11H63Q69 11 69 17V47Q69 53 63 53H9Q3 53 3 47V17Q3 11 9 11Z" />
            <circle cx="36" cy="31" r="14" />
            <circle cx="57" cy="21" r="3" fill="currentColor" stroke="none" />
          </svg>
        </ComposerButton>
        <ComposerButton type="button" $space={56} aria-label="語音訊息">
          <svg width="50" height="70" viewBox="0 0 50 70" fill="none" stroke="currentColor" strokeWidth="4" strokeLinecap="round" aria-hidden="true">
            <rect x="14" y="3" width="22" height="44" rx="11" />
            <path d="M3 35Q3 58 25 58Q47 58 47 35M25 58V68" />
          </svg>
        </ComposerButton>
      </Composer>
    </Page>
  );
}

export default App;
